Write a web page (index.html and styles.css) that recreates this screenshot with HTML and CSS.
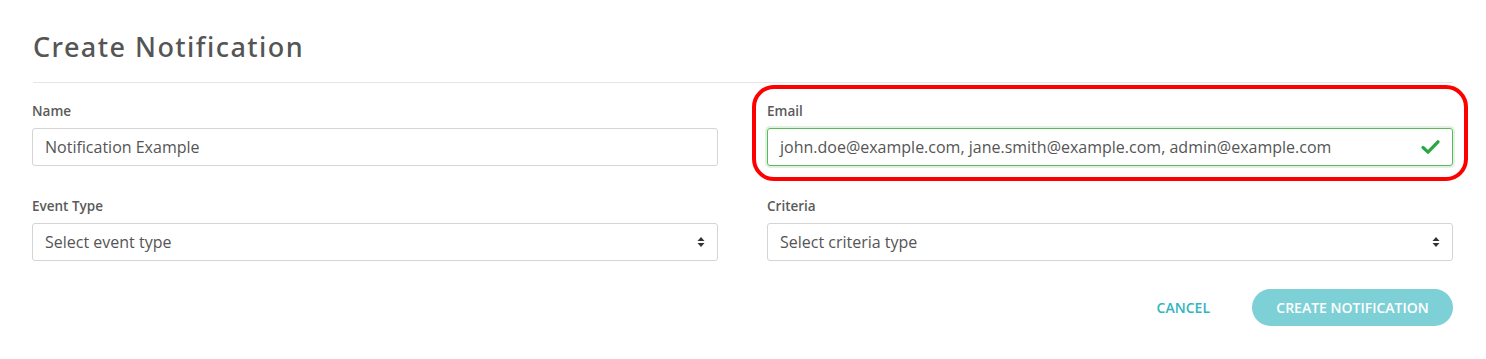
FILE: index.html
```html
<!DOCTYPE html>
<html lang="en">
<head>
    <meta charset="UTF-8">
    <meta name="viewport" content="width=device-width, initial-scale=1.0">
    <title>Create Notification</title>
    <link rel="stylesheet" href="styles.css">
</head>
<body>
    <div class="panel">
        <h2 class="title">Create Notification</h2>
        <form class="form">
            <div class="field">
                <label>Name</label>
                <div class="control">Notification Example</div>
            </div>
            <div class="field highlight">
                <label>Email</label>
                <div class="control valid">
                    <span>john.doe@example.com, jane.smith@example.com, admin@example.com</span>
                    <svg class="check" width="19" height="16" viewBox="0 0 19 16">
                        <path d="M2 8.5 L7 13.2 L17 2.8" fill="none" stroke="#28a745" stroke-width="3.2" stroke-linecap="round" stroke-linejoin="round"/>
                    </svg>
                </div>
            </div>
            <div class="field">
                <label>Event Type</label>
                <div class="control select">
                    <span>Select event type</span>
                    <svg class="arrows" width="8" height="12" viewBox="0 0 8 12">
                        <path d="M4 1 L7.5 5 L0.5 5 Z M4 11 L7.5 7 L0.5 7 Z" fill="#333"/>
                    </svg>
                </div>
            </div>
            <div class="field">
                <label>Criteria</label>
                <div class="control select">
                    <span>Select criteria type</span>
                    <svg class="arrows" width="8" height="12" viewBox="0 0 8 12">
                        <path d="M4 1 L7.5 5 L0.5 5 Z M4 11 L7.5 7 L0.5 7 Z" fill="#333"/>
                    </svg>
                </div>
            </div>
        </form>
        <div class="actions">
            <button class="btn-link" type="button">Cancel</button>
            <button class="btn-primary" type="button">Create Notification</button>
        </div>
    </div>
</body>
</html>
```

FILE: styles.css
```css
body {
    margin: 0;
    padding: 0;
    background: #fff;
    font-family: 'Open Sans', sans-serif;
    color: #555;
}

.panel {
    width: 1421px;
    padding: 28px 33px 0 32px;
}

.title {
    margin: 0 0 0 1px;
    font-family: 'Noto Sans', sans-serif;
    font-size: 27px;
    font-weight: 500;
    letter-spacing: 1.45px;
    line-height: 38px;
    color: #555;
    padding-bottom: 16px;
    border-bottom: 1px solid #e5e5e5;
}

.form {
    display: grid;
    grid-template-columns: 1fr 1fr;
    column-gap: 49px;
    row-gap: 31px;
    padding-top: 19px;
}

.field {
    position: relative;
}

.field label {
    display: block;
    font-size: 13.5px;
    font-weight: 600;
    line-height: 18px;
    margin-bottom: 8px;
    color: #5a5a5a;
}

.control {
    height: 38px;
    box-sizing: border-box;
    border: 1px solid #d4d4d4;
    border-radius: 3px;
    padding: 0 12px;
    font-size: 16px;
    color: #555;
    display: flex;
    align-items: center;
    justify-content: space-between;
}

.control.valid {
    border-color: #5cb85c;
    box-shadow: 0 0 0 2px rgba(92, 184, 92, 0.18);
}

.highlight::after {
    content: '';
    position: absolute;
    left: -15px;
    top: -17px;
    right: -15px;
    bottom: -15px;
    border: 4px solid #ff0000;
    border-radius: 22px;
}

.actions {
    display: flex;
    justify-content: flex-end;
    align-items: center;
    gap: 42px;
    margin-top: 28px;
}

.actions button {
    font-family: 'Open Sans', sans-serif;
    font-size: 14px;
    font-weight: 600;
    text-transform: uppercase;
    border: none;
    cursor: pointer;
}

.btn-link {
    background: none;
    color: #33b5bd;
    padding: 0;
}

.btn-primary {
    background: #7dd0d5;
    color: #fff;
    height: 37px;
    width: 201px;
    border-radius: 19px;
}
```
